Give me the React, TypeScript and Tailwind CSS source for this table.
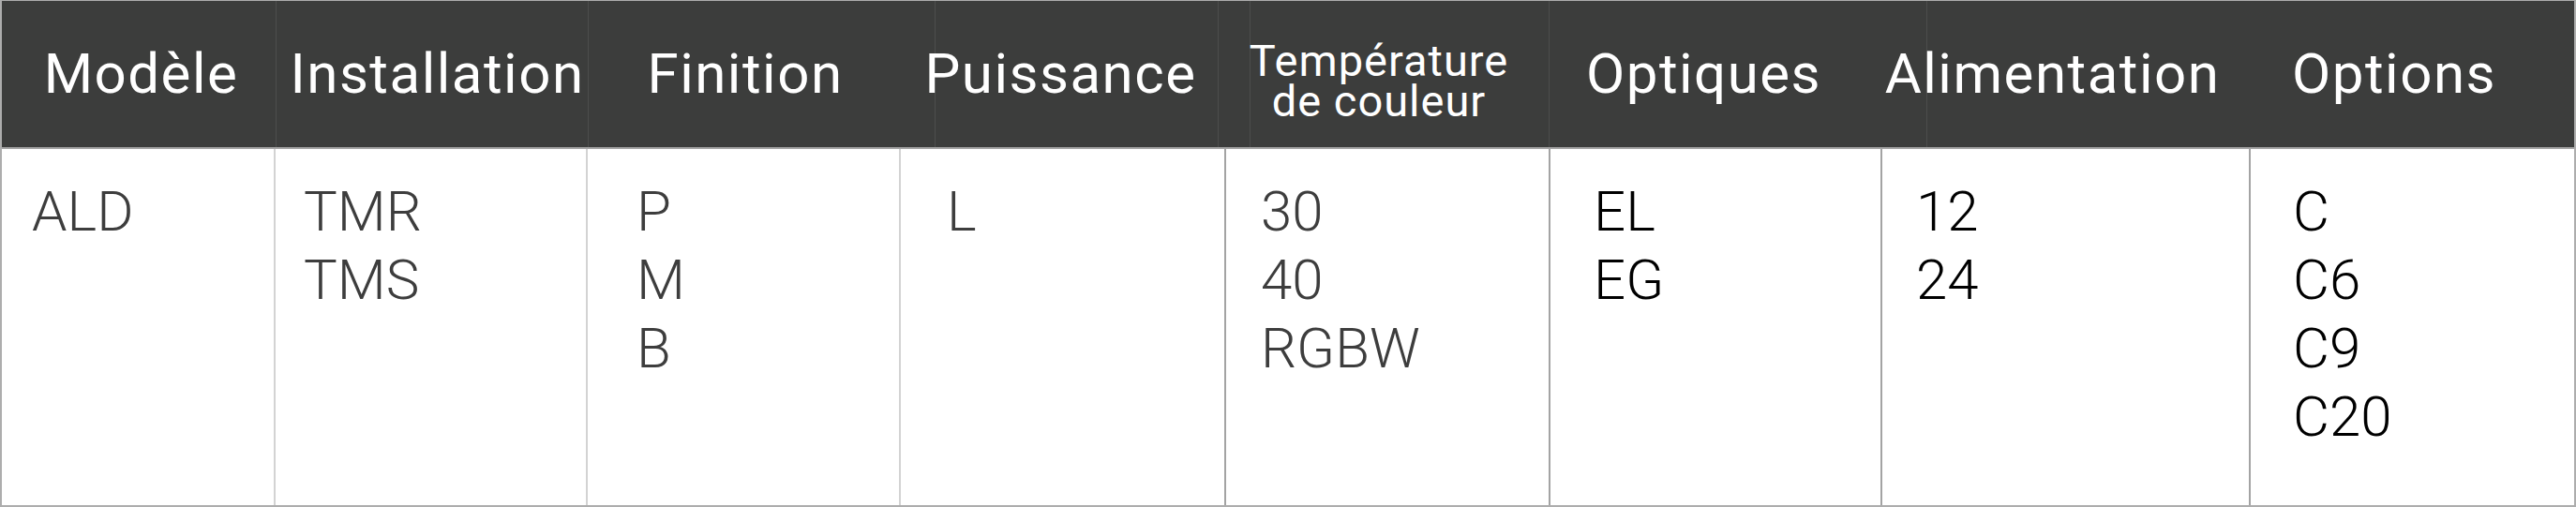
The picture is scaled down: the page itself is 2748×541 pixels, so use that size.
import React from "react";

type Column = {
  title: React.ReactNode;
  values: string[];
  width: string;
  headShift: string;
  cellPad: string;
  divider: string;
  dark?: boolean;
};

const columns: Column[] = [
  {
    title: "Modèle",
    values: ["ALD"],
    width: "w-[292px]",
    headShift: "pl-[5px]",
    cellPad: "pl-[32px]",
    divider: "border-r-2 border-[#d3d3d3]",
  },
  {
    title: "Installation",
    values: ["TMR", "TMS"],
    width: "w-[333px]",
    headShift: "pl-[12px]",
    cellPad: "pl-[30px]",
    divider: "border-r-2 border-[#d3d3d3]",
  },
  {
    title: "Finition",
    values: ["P", "M", "B"],
    width: "w-[334px]",
    headShift: "pl-[2px]",
    cellPad: "pl-[52px]",
    divider: "border-r-2 border-[#d3d3d3]",
  },
  {
    title: "Puissance",
    values: ["L"],
    width: "w-[347px]",
    headShift: "pr-[6px]",
    cellPad: "pl-[49px]",
    divider: "border-r-2 border-[#a3a3a3]",
  },
  {
    title: (
      <span className="block pt-[14px] text-[47px] leading-[43px] tracking-[1px]">
        Température
        <br />
        de couleur
      </span>
    ),
    values: ["30", "40", "RGBW"],
    width: "w-[346px]",
    headShift: "pr-[20px]",
    cellPad: "pl-[37px]",
    divider: "border-r-2 border-[#a3a3a3]",
  },
  {
    title: "Optiques",
    values: ["EL", "EG"],
    width: "w-[354px]",
    headShift: "pr-[27px]",
    cellPad: "pl-[46px]",
    divider: "border-r-2 border-[#a3a3a3]",
    dark: true,
  },
  {
    title: "Alimentation",
    values: ["12", "24"],
    width: "w-[393px]",
    headShift: "pr-[30px]",
    cellPad: "pl-[36px]",
    divider: "border-r-2 border-[#a3a3a3]",
    dark: true,
  },
  {
    title: "Options",
    values: ["C", "C6", "C9", "C20"],
    width: "flex-1",
    headShift: "pr-[39px]",
    cellPad: "pl-[45px]",
    divider: "",
    dark: true,
  },
];

// faint separators drawn behind the header labels
const headerLines = [
  "w-[293px]",
  "w-[333px]",
  "w-[370px]",
  "w-[302px]",
  "w-[34px]",
  "w-[319px]",
  "w-[403px]",
];

export default function App() {
  return (
    <div
      className="w-[2748px] h-[541px] bg-white"
      style={{ fontFamily: "Roboto, 'Liberation Sans', sans-serif" }}
    >
      <div className="flex flex-col h-full border-2 border-t border-[#adadad]">
        {/* Header */}
        <div className="relative h-[158px] shrink-0 bg-[#3c3d3c] border-b-2 border-[#a4a4a4]">
          <div className="absolute inset-0 flex">
            {headerLines.map((w, i) => (
              <div key={i} className={`${w} h-full border-r border-[#4c4d4c]`} />
            ))}
          </div>
          <div className="relative flex h-full">
            {columns.map((col, i) => (
              <div
                key={i}
                className={`${col.width} ${col.headShift} flex items-center justify-center text-center text-white text-[60px] tracking-[1.5px] whitespace-nowrap`}
              >
                {col.title}
              </div>
            ))}
          </div>
        </div>

        {/* Body */}
        <div className="flex flex-1">
          {columns.map((col, i) => (
            <div
              key={i}
              className={`${col.width} ${col.divider} ${col.cellPad} pt-[30px] font-light text-[60px] leading-[73px] ${
                col.dark ? "text-black" : "text-[#3d3d3d]"
              }`}
            >
              {col.values.map((v) => (
                <div key={v}>{v}</div>
              ))}
            </div>
          ))}
        </div>
      </div>
    </div>
  );
}
